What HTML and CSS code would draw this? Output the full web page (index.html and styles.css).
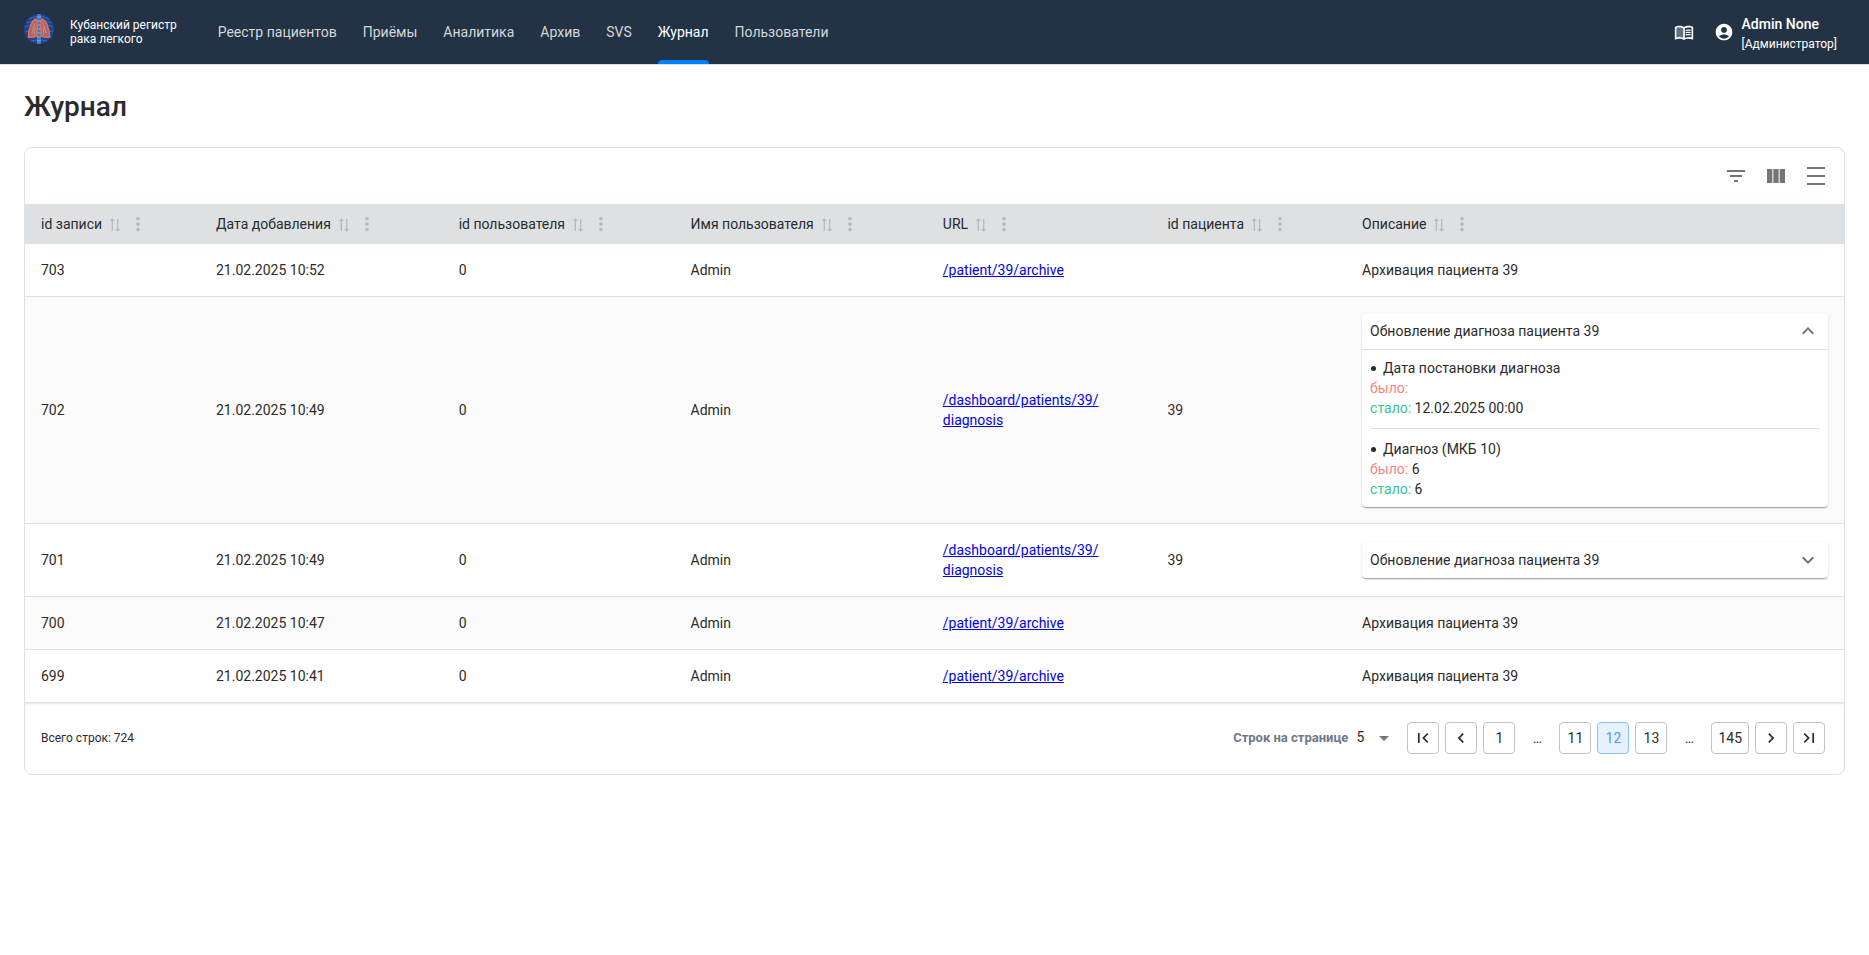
FILE: index.html
```
<!DOCTYPE html>
<html lang="ru">
<head>
  <meta charset="UTF-8">
  <meta name="viewport" content="width=device-width, initial-scale=1">
  <title>Журнал</title>
  <link rel="stylesheet" href="styles.css">
</head>
<body>
<svg class="sprite" aria-hidden="true">
  <symbol id="sort" viewBox="0 0 24 24"><path transform="rotate(-90 12 12)" d="m22 8-4-4v3H3v2h15v3l4-4zM2 16l4 4v-3h15v-2H6v-3l-4 4z"/></symbol>
  <symbol id="more" viewBox="0 0 24 24"><path d="M12 8c1.1 0 2-.9 2-2s-.9-2-2-2-2 .9-2 2 .9 2 2 2zm0 2c-1.1 0-2 .9-2 2s.9 2 2 2 2-.9 2-2-.9-2-2-2zm0 6c-1.1 0-2 .9-2 2s.9 2 2 2 2-.9 2-2-.9-2-2-2z"/></symbol>
  <symbol id="expand" viewBox="0 0 24 24"><path d="M16.59 8.59 12 13.17 7.41 8.59 6 10l6 6 6-6z"/></symbol>
</svg>

<header class="header">
  <a class="brand" href="#">
    <svg class="brandLogo" viewBox="0 0 30 30" aria-hidden="true">
      <circle cx="15" cy="15" r="15" fill="#1c4691"/>
      <path d="M5 5q10-5 20 0M3 9q12-6 24 0M1 13q14-7 28 0M1 18q14-5 28 0M3 23q12-4 24 0M7 27q8-3 16 0" fill="none" stroke="#3a6cb8" stroke-width="1"/>
      <path d="M13 0h4v30h-4z" fill="#3f79c2"/>
      <path d="M13 3h4M13 7h4M13 11h4M13 15h4M13 19h4M13 23h4M13 27h4" stroke="#86aedb"/>
      <path d="M12 5c1.500 2 1.500 10 .5 17-2 1-5 1.500-8 1C4 16 8 6 12 5zM18 5c-1.500 2-1.500 10-.5 17 2 1 5 1.500 8 1C26 16 22 6 18 5z" fill="#a06a75" stroke="#f0684f" stroke-width="1.500"/>
      <path d="M11 9l-3 10M11 13l-1 8M19 9l3 10M19 13l1 8" stroke="#d98578" stroke-width="1"/>
    </svg>
    <span class="brandName">Кубанский регистр<br>рака легкого</span>
  </a>
  <nav class="nav">
    <a href="#">Реестр пациентов</a>
    <a href="#">Приёмы</a>
    <a href="#">Аналитика</a>
    <a href="#">Архив</a>
    <a href="#">SVS</a>
    <a class="active" href="#" aria-current="page">Журнал</a>
    <a href="#">Пользователи</a>
  </nav>
  <div class="user">
    <button class="iconButton" type="button" aria-label="Справка">
      <svg viewBox="0 0 24 24"><path opacity=".3" d="M3 7v11.500c1.100-.35 2.300-.5 3.500-.5 1.340 0 3.130.41 4.500.99V7.490C9.630 6.910 7.840 6.500 6.500 6.500 5.300 6.500 4.100 6.650 3 7z"/><path d="M21 5c-1.110-.35-2.330-.5-3.500-.5-1.950 0-4.050.4-5.500 1.500-1.450-1.100-3.550-1.500-5.500-1.500S2.450 4.900 1 6v14.650c0 .25.25.5.5.5.1 0 .15-.05.25-.05C3.100 20.450 5.050 20 6.500 20c1.950 0 4.050.4 5.500 1.500 1.350-.85 3.800-1.500 5.500-1.500 1.650 0 3.350.3 4.750 1.050.1.05.15.05.25.05.25 0 .5-.25.5-.5V6c-.6-.45-1.250-.75-2-1zM3 18.500V7c1.100-.35 2.300-.5 3.500-.5 1.340 0 3.130.41 4.500.99v11.500C9.630 18.410 7.840 18 6.500 18c-1.200 0-2.400.15-3.500.5zm18 0c-1.100-.35-2.300-.5-3.500-.5-1.340 0-3.130.41-4.500.99V7.490c1.370-.59 3.160-.99 4.500-.99 1.200 0 2.400.15 3.500.5v11.500z"/><path d="M14 9.470c1.040-.31 2.220-.47 3.500-.47.86 0 1.710.09 2.500.24v1.520c-.77-.17-1.620-.26-2.500-.26-1.320 0-2.510.19-3.500.54zM14 12.130c1.040-.31 2.220-.47 3.500-.47.86 0 1.710.09 2.500.24v1.520c-.77-.17-1.620-.26-2.500-.26-1.320 0-2.510.19-3.500.54zM14 14.790c1.040-.31 2.220-.47 3.500-.47.86 0 1.710.09 2.500.24v1.520c-.77-.17-1.620-.26-2.500-.26-1.320 0-2.510.19-3.500.54z"/></svg>
    </button>
    <button class="account" type="button">
      <svg viewBox="0 0 24 24" aria-hidden="true"><path d="M12 2C6.480 2 2 6.480 2 12s4.480 10 10 10 10-4.480 10-10S17.520 2 12 2zm0 4c1.930 0 3.500 1.570 3.500 3.500S13.930 13 12 13s-3.500-1.570-3.500-3.500S10.070 6 12 6zm0 14c-2.030 0-4.430-.82-6.140-2.880C7.550 15.800 9.680 15 12 15s4.450.8 6.140 2.120C16.430 19.180 14.030 20 12 20z"/></svg>
      <span class="accountText">
        <span class="accountName">Admin None</span>
        <span class="accountRole">[Администратор]</span>
      </span>
    </button>
  </div>
</header>

<main class="page">
  <h1>Журнал</h1>
  <section class="card">
    <div class="toolbar">
      <button type="button" aria-label="Фильтры"><svg viewBox="0 0 24 24"><path d="M10 18h4v-2h-4v2zM3 6v2h18V6H3zm3 7h12v-2H6v2z"/></svg></button>
      <button type="button" aria-label="Колонки"><svg viewBox="0 0 24 24"><path d="M14.670 5v14H9.330V5h5.340zm1 14H21V5h-5.330v14zm-7.340 0V5H3v14h5.330z"/></svg></button>
      <button type="button" aria-label="Плотность"><svg viewBox="0 0 24 24"><path d="M3 3h18v2H3zm0 16h18v2H3zm0-8h18v2H3z"/></svg></button>
    </div>
    <table class="journal">
      <thead>
        <tr>
          <th class="colId"><div class="head">id записи<button class="sort" type="button" aria-label="Сортировать"><svg><use href="#sort"/></svg></button><button class="more" type="button" aria-label="Действия"><svg><use href="#more"/></svg></button></div></th>
          <th class="colDate"><div class="head">Дата добавления<button class="sort" type="button" aria-label="Сортировать"><svg><use href="#sort"/></svg></button><button class="more" type="button" aria-label="Действия"><svg><use href="#more"/></svg></button></div></th>
          <th class="colUserId"><div class="head">id пользователя<button class="sort" type="button" aria-label="Сортировать"><svg><use href="#sort"/></svg></button><button class="more" type="button" aria-label="Действия"><svg><use href="#more"/></svg></button></div></th>
          <th class="colUser"><div class="head">Имя пользователя<button class="sort" type="button" aria-label="Сортировать"><svg><use href="#sort"/></svg></button><button class="more" type="button" aria-label="Действия"><svg><use href="#more"/></svg></button></div></th>
          <th class="colUrl"><div class="head">URL<button class="sort" type="button" aria-label="Сортировать"><svg><use href="#sort"/></svg></button><button class="more" type="button" aria-label="Действия"><svg><use href="#more"/></svg></button></div></th>
          <th class="colPatient"><div class="head">id пациента<button class="sort" type="button" aria-label="Сортировать"><svg><use href="#sort"/></svg></button><button class="more" type="button" aria-label="Действия"><svg><use href="#more"/></svg></button></div></th>
          <th><div class="head">Описание<button class="sort" type="button" aria-label="Сортировать"><svg><use href="#sort"/></svg></button><button class="more" type="button" aria-label="Действия"><svg><use href="#more"/></svg></button></div></th>
        </tr>
      </thead>
      <tbody>
        <tr>
          <td>703</td>
          <td>21.02.2025 10:52</td>
          <td>0</td>
          <td>Admin</td>
          <td><a href="#">/patient/39/archive</a></td>
          <td></td>
          <td>Архивация пациента 39</td>
        </tr>
        <tr>
          <td>702</td>
          <td>21.02.2025 10:49</td>
          <td>0</td>
          <td>Admin</td>
          <td><a href="#">/dashboard/patients/39/<wbr>diagnosis</a></td>
          <td>39</td>
          <td>
            <details class="accordion" open>
              <summary>Обновление диагноза пациента 39<svg><use href="#expand"/></svg></summary>
              <div class="changes">
                <div class="field">Дата постановки диагноза</div>
                <div><span class="before">было:</span></div>
                <div><span class="after">стало:</span> 12.02.2025 00:00</div>
                <hr>
                <div class="field">Диагноз (МКБ 10)</div>
                <div><span class="before">было:</span> 6</div>
                <div><span class="after">стало:</span> 6</div>
              </div>
            </details>
          </td>
        </tr>
        <tr>
          <td>701</td>
          <td>21.02.2025 10:49</td>
          <td>0</td>
          <td>Admin</td>
          <td><a href="#">/dashboard/patients/39/<wbr>diagnosis</a></td>
          <td>39</td>
          <td>
            <details class="accordion">
              <summary>Обновление диагноза пациента 39<svg><use href="#expand"/></svg></summary>
            </details>
          </td>
        </tr>
        <tr>
          <td>700</td>
          <td>21.02.2025 10:47</td>
          <td>0</td>
          <td>Admin</td>
          <td><a href="#">/patient/39/archive</a></td>
          <td></td>
          <td>Архивация пациента 39</td>
        </tr>
        <tr>
          <td>699</td>
          <td>21.02.2025 10:41</td>
          <td>0</td>
          <td>Admin</td>
          <td><a href="#">/patient/39/archive</a></td>
          <td></td>
          <td>Архивация пациента 39</td>
        </tr>
      </tbody>
    </table>
    <footer class="footer">
      <span class="total">Всего строк: 724</span>
      <div class="paging">
        <label for="pageSize">Строк на странице</label>
        <div class="pageSize">
          <select id="pageSize">
            <option>5</option>
            <option>10</option>
            <option>20</option>
          </select>
          <svg viewBox="0 0 24 24" aria-hidden="true"><path d="m7 10 5 5 5-5z"/></svg>
        </div>
        <nav class="pages" aria-label="Страницы">
          <button type="button" aria-label="Первая"><svg viewBox="0 0 24 24"><path d="M18.410 16.590 13.820 12l4.590-4.590L17 6l-6 6 6 6zM6 6h2v12H6z"/></svg></button>
          <button type="button" aria-label="Предыдущая"><svg viewBox="0 0 24 24"><path d="M15.410 7.410 14 6l-6 6 6 6 1.410-1.410L10.830 12z"/></svg></button>
          <button type="button">1</button>
          <span>…</span>
          <button type="button">11</button>
          <button class="current" type="button" aria-current="page">12</button>
          <button type="button">13</button>
          <span>…</span>
          <button type="button">145</button>
          <button type="button" aria-label="Следующая"><svg viewBox="0 0 24 24"><path d="M10 6 8.590 7.410 13.170 12l-4.580 4.590L10 18l6-6z"/></svg></button>
          <button type="button" aria-label="Последняя"><svg viewBox="0 0 24 24"><path d="M5.590 7.410 10.180 12l-4.590 4.590L7 18l6-6-6-6zM16 6h2v12h-2z"/></svg></button>
        </nav>
      </div>
    </footer>
  </section>
</main>
</body>
</html>
```
FILE: styles.css
```
:root {
  --headerColor: #233345;
  --textColor: #2b2b2b;
  --lineColor: #dde1e4;
  --iconColor: #757575;
  --accentColor: #0080ff;
}
* {
  box-sizing: border-box;
}
body {
  margin: 0;
  background-color: #fff;
  color: var(--textColor);
  font: 14px/20px Roboto, sans-serif;
}
button {
  padding: 0;
  border: 0;
  background: none;
  color: inherit;
  font: inherit;
  cursor: pointer;
}
svg {
  display: block;
  flex-shrink: 0;
  fill: currentColor;
}
.sprite {
  display: none;
}

/* header */
.header {
  display: flex;
  height: 64px;
  padding: 0 32px 0 24px;
  background-color: var(--headerColor);
  box-shadow: 0 1px 0 var(--lineColor);
  color: #fff;
}
.brand {
  display: flex;
  align-items: center;
  gap: 16px;
  margin-right: 41px;
  color: #fff;
  font-size: 12px;
  line-height: 14px;
  text-decoration: none;
}
.brandLogo {
  width: 30px;
  height: 30px;
  margin-bottom: 6px;
}
.nav {
  display: flex;
  gap: 26px;
}
.nav a {
  display: flex;
  align-items: center;
  color: #d3d6da;
  text-decoration: none;
}
.nav a.active {
  position: relative;
  color: #fff;
}
.nav a.active::after {
  content: "";
  position: absolute;
  left: 0;
  right: 0;
  bottom: 0;
  height: 4px;
  border-radius: 4px 4px 0 0;
  background-color: var(--accentColor);
}
.user {
  display: flex;
  align-items: center;
  gap: 20px;
  margin-left: auto;
}
.user svg {
  width: 20px;
  height: 20px;
}
.account {
  display: flex;
  align-items: center;
  gap: 8px;
  text-align: left;
}
.accountText {
  display: flex;
  flex-direction: column;
  padding-top: 4px;
}
.accountName {
  font-weight: 500;
}
.accountRole {
  font-size: 12px;
}

/* page */
.page {
  padding: 25px 24px 24px;
}
h1 {
  margin: 0 0 22px;
  font-size: 28px;
  font-weight: 500;
  line-height: 36px;
}
.card {
  border: 1px solid var(--lineColor);
  border-radius: 8px;
  overflow: hidden;
}
.toolbar {
  display: flex;
  justify-content: flex-end;
  padding: 8px;
  color: var(--iconColor);
}
.toolbar button {
  padding: 8px;
}
.toolbar svg {
  width: 24px;
  height: 24px;
}

/* table */
.journal {
  width: 100%;
  border-collapse: separate;
  border-spacing: 0;
  table-layout: fixed;
}
.colId { width: 9.62%; }
.colDate { width: 13.34%; }
.colUserId { width: 12.75%; }
.colUser { width: 13.87%; }
.colUrl { width: 12.35%; }
.colPatient { width: 10.7%; }
.journal th {
  height: 40px;
  padding: 0 16px;
  background-color: var(--lineColor);
  font-weight: 400;
  text-align: left;
}
.head {
  display: flex;
  align-items: center;
  white-space: nowrap;
}
.head button {
  margin-left: 4px;
  color: #b7babc;
}
.head .sort {
  margin: 2px 0 0 5px;
}
.head .sort svg {
  width: 16px;
  height: 16px;
}
.head .more svg {
  width: 22px;
  height: 22px;
}
.journal td {
  padding: 16px;
  border-bottom: 1px solid #e0e0e0;
}
.journal tbody tr:nth-child(even) {
  background-color: #fbfbfb;
}
.journal td a {
  color: #0000ee;
}

/* accordion */
.accordion {
  border-radius: 4px;
  background-color: #fff;
  box-shadow: 0 2px 1px -1px rgba(0, 0, 0, .2), 0 1px 1px rgba(0, 0, 0, .14), 0 1px 3px rgba(0, 0, 0, .12);
}
.accordion summary {
  display: flex;
  align-items: center;
  justify-content: space-between;
  height: 36px;
  padding: 0 8px;
  list-style: none;
  cursor: pointer;
}
.accordion summary svg {
  width: 24px;
  height: 24px;
  color: var(--iconColor);
}
.accordion[open] summary svg {
  transform: rotate(180deg);
}
.changes {
  padding: 8px;
  border-top: 1px solid #e0e0e0;
}
.changes hr {
  margin: 10px 0;
  border: 0;
  border-top: 1px solid #e0e0e0;
}
.field {
  display: flex;
  align-items: center;
}
.field::before {
  content: "";
  width: 5px;
  height: 5px;
  margin: 1px 7px 0 1px;
  border-radius: 50%;
  background-color: var(--textColor);
}
.before {
  color: #fa8282;
}
.after {
  color: #34c38f;
}

/* footer */
.footer {
  display: flex;
  align-items: center;
  justify-content: space-between;
  padding: 19px 16px 20px;
  box-shadow: inset 0 1px 2px rgba(0, 0, 0, .1);
}
.total {
  font-size: 12px;
}
.paging {
  display: flex;
  align-items: center;
}
.paging label {
  color: #6c7a89;
  font-size: 13px;
  font-weight: 700;
}
.pageSize {
  position: relative;
  margin: 0 8px;
}
.pageSize select {
  width: 40px;
  height: 24px;
  padding: 0 0 2px;
  border: 0;
  appearance: none;
  background: none;
  color: inherit;
  font: inherit;
}
.pageSize svg {
  position: absolute;
  top: 0;
  right: 0;
  width: 24px;
  height: 24px;
  color: var(--iconColor);
  pointer-events: none;
}
.pages {
  display: flex;
}
.pages button,
.pages span {
  display: flex;
  align-items: center;
  justify-content: center;
  min-width: 32px;
  height: 32px;
  margin: 0 3px;
  padding: 0 6px;
}
.pages button {
  border: 1px solid #c4c4c4;
  border-radius: 4px;
}
.pages button.current {
  border-color: #8cc2fb;
  background-color: #e6f1fe;
  color: #4c9df5;
}
.pages svg {
  width: 20px;
  height: 20px;
  margin: 0 -1px;
}
```
